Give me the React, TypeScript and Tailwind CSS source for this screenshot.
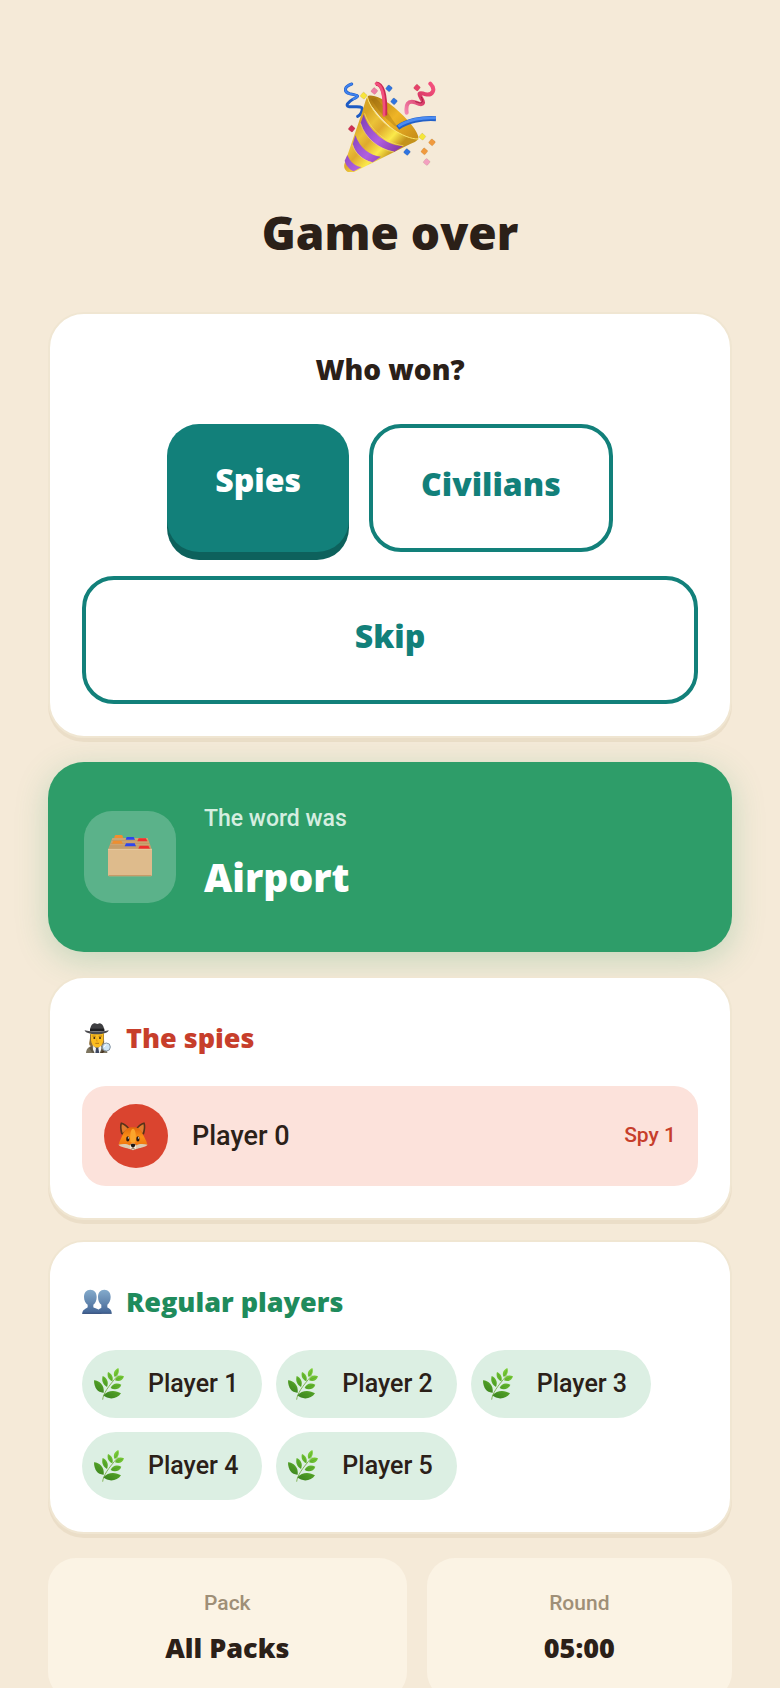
import { useState } from "react";

type Winner = "spies" | "civilians" | "skip";

const regularPlayers = ["Player 1", "Player 2", "Player 3", "Player 4", "Player 5"];

const confetti: [number, number, string][] = [
  [86, 62, "#f7e43c"],
  [118, 48, "#ee7ca4"],
  [162, 40, "#2f74e0"],
  [177, 79, "#2f74e0"],
  [246, 38, "#e6426a"],
  [50, 161, "#cf2f55"],
  [262, 185, "#f5e63a"],
  [291, 202, "#f09a3e"],
  [268, 229, "#f09a3e"],
  [216, 231, "#2f74e0"],
  [275, 261, "#f3a0c0"],
];

function PartyIcon() {
  return (
    <svg className="w-23 h-23" viewBox="27 15 276 276" fill="none" strokeLinecap="round" aria-hidden="true">
      <defs>
        <linearGradient id="cone" x1="60" y1="150" x2="165" y2="245" gradientUnits="userSpaceOnUse">
          <stop offset="0" stopColor="#d8a524" />
          <stop offset="0.25" stopColor="#ebc238" />
          <stop offset="0.45" stopColor="#dfaa2e" />
          <stop offset="0.75" stopColor="#fbea4a" />
          <stop offset="1" stopColor="#c4921c" />
        </linearGradient>
        <linearGradient id="mouth" x1="110" y1="70" x2="240" y2="190" gradientUnits="userSpaceOnUse">
          <stop offset="0" stopColor="#b07c12" />
          <stop offset="0.5" stopColor="#efb526" />
          <stop offset="1" stopColor="#c98f1a" />
        </linearGradient>
        <linearGradient id="stripe" x1="60" y1="140" x2="190" y2="240" gradientUnits="userSpaceOnUse">
          <stop offset="0" stopColor="#7d3fb4" />
          <stop offset="0.55" stopColor="#b060e0" />
          <stop offset="1" stopColor="#8434a0" />
        </linearGradient>
        <linearGradient id="ribbon" x1="210" y1="110" x2="300" y2="30" gradientUnits="userSpaceOnUse">
          <stop offset="0" stopColor="#f489b0" />
          <stop offset="0.5" stopColor="#d93a66" />
          <stop offset="1" stopColor="#f5527f" />
        </linearGradient>
      </defs>
      <path d="M99 63C120 55 165 82 205 122C240 157 257 187 248 193C225 200 175 168 145 135C115 102 92 72 99 63Z" fill="url(#mouth)" />
      <path d="M108 72C125 100 145 125 178 152L190 158C165 125 150 95 122 68Z" fill="#8d610c" opacity="0.3" />
      <path d="M50 27C24 36 28 52 44 56C72 61 74 63 55 72C37 82 31 92 42 95C62 97 80 92 82 101C81 113 75 121 68 124" stroke="#1d5bc4" strokeWidth="9" />
      <path d="M50 27C24 36 28 52 44 56C72 61 74 63 55 72" stroke="#3f82ee" strokeWidth="6" />
      <path d="M97 65C104 100 140 141 172 162C200 180 228 193 250 192C245 199 236 203 224 208L55 292C40 297 24 285 28 268L82 110C88 90 92 72 97 65Z" fill="url(#cone)" />
      <path d="M97 65C104 100 140 141 172 162C200 180 228 193 250 192" stroke="#fbe46a" strokeWidth="3" />
      <path d="M86 118C100 165 150 210 204 214L178 230C130 222 88 188 77 144Z" fill="url(#stripe)" />
      <path d="M61 181C75 220 105 242 138 245L113 262C83 255 60 235 53 208Z" fill="url(#stripe)" />
      <path d="M37 240C46 262 62 275 80 276L56 289C42 282 32 270 29 257Z" fill="url(#stripe)" />
      <path d="M77 146C90 189 130 222 176 231M53 210C60 236 84 256 111 263M89 116C104 162 152 206 204 212" stroke="#f6dc74" strokeWidth="2" />
      <path d="M123 26C146 28 152 70 150 121" stroke="#c92952" strokeWidth="13" strokeLinecap="butt" />
      <path d="M123 26C143 28 149 70 147 121" stroke="#f34f7d" strokeWidth="8" />
      <path d="M286 26C304 44 292 62 272 58C250 50 250 56 259 70C270 87 262 92 243 83C217 74 212 90 215 113" stroke="url(#ribbon)" strokeWidth="12" />
      <path d="M259 66C268 84 260 88 242 80" stroke="#a82048" strokeWidth="3" />
      <path d="M188 158C215 138 260 128 303 131" stroke="#2260c8" strokeWidth="15" strokeLinecap="butt" />
      <path d="M190 154C218 135 262 126 303 129" stroke="#4c8cf2" strokeWidth="8" strokeLinecap="butt" />
      {confetti.map(([x, y, color]) => (
        <rect key={`${x}-${y}`} x={x - 8} y={y - 8} width="16" height="16" rx="3" fill={color} stroke="#6b4a20" strokeOpacity="0.3" strokeWidth="1" transform={`rotate(40 ${x} ${y})`} />
      ))}
    </svg>
  );
}

function CardBoxIcon() {
  return (
    <svg className="w-11 h-11" viewBox="0 7 132 132" aria-hidden="true">
      <path d="M18 18L20 10Q21 7 24 7H40Q43 7 44 10L46 18Z" fill="#f28f2e" />
      <path d="M13 16H119L132 52H0Z" fill="#cda471" />
      <path d="M11 24H121M8 32H125M5 40H127M3 46H129" stroke="#b8915f" strokeWidth="2" />
      <path d="M53 21L56 13H77L81 21Z" fill="#2c46ee" />
      <path d="M88 26L92 17H114L118 26Z" fill="#f02e2e" />
      <path d="M12 33L16 24H40L45 33Z" fill="#ee8f30" />
      <path d="M50 41L54 32H80L84 41Z" fill="#2c46ee" />
      <path d="M91 48L95 39H121L126 48Z" fill="#f02e2e" />
      <path d="M0 50H132V127Q132 131 128 131H4Q0 131 0 127Z" fill="#debb8c" />
      <path d="M0 50H132" stroke="#efd3ad" strokeWidth="2" />
      <path d="M2 129H130" stroke="#c09663" strokeWidth="3" />
    </svg>
  );
}

function SpyIcon() {
  return (
    <svg className="w-[30px] h-[30px]" viewBox="0 0 90 90" aria-hidden="true">
      <path d="M12 91C12 76 22 69 34 68H58C69 70 76 78 76 91Z" fill="#7d7560" />
      <path d="M25 28H66V45C66 62 57 73 46 73C34 73 25 62 25 45Z" fill="#fbbd1f" />
      <path d="M24 34L27 34V52C28 60 32 66 34 70L24 68C18 62 26 52 24 34ZM66 34L64 34V52C63 60 59 66 57 70L64 68C69 62 65 52 66 34Z" fill="#8a6a35" />
      <path d="M34 68L45 78L57 68L61 91H31Z" fill="#f2f4f6" />
      <path d="M42 75H49L52 91H40Z" fill="#3c4660" />
      <path d="M28 68L22 76L32 91H38ZM62 68L68 76L58 91H53Z" fill="#5d5643" />
      <path d="M24 24C25 8 31 1 39 1L46 3L53 1C61 2 66 10 67 24Z" fill="#3f3f42" />
      <path d="M24 17H67V25H24Z" fill="#1f1f22" />
      <path d="M8 22C25 27 66 27 80 22C80 29 65 34 44 34C24 34 8 29 8 22Z" fill="#4b4b4f" />
      <circle cx="37" cy="45" r="3" fill="#3d2712" />
      <circle cx="54" cy="45" r="3" fill="#3d2712" />
      <path d="M31 39L41 40M50 40L60 39M40 61H51" stroke="#8c5312" strokeWidth="2" />
      <path d="M45 46L43 54H48" stroke="#dd8f10" strokeWidth="2" fill="none" />
      <path d="M66 83L58 91" stroke="#4a3524" strokeWidth="5" />
      <circle cx="73" cy="72" r="12" fill="#cfe6f7" stroke="#8494a2" strokeWidth="3" />
      <path d="M67 72Q68 66 73 65" stroke="#fff" strokeWidth="3" fill="none" />
    </svg>
  );
}

function FoxIcon() {
  return (
    <svg className="w-[30px] h-[30px]" viewBox="0 0 92 90" aria-hidden="true">
      <defs>
        <linearGradient id="fox" x1="0" y1="0" x2="0" y2="1">
          <stop offset="0" stopColor="#e0660c" />
          <stop offset="0.45" stopColor="#fb9016" />
          <stop offset="1" stopColor="#ea6a0c" />
        </linearGradient>
      </defs>
      <path d="M10 40C5 24 5 10 9 3C18 4 28 12 35 21L20 42ZM80 40C85 24 85 10 81 3C72 4 62 12 56 21L70 42Z" fill="#57321a" />
      <path d="M14 36C11 24 10 15 12 9C18 11 25 17 30 23ZM76 36C79 24 80 15 78 9C72 11 65 17 60 23Z" fill="#e07c30" />
      <path d="M46 18C60 17 72 25 76 40C81 50 86 58 90 70L46 84L2 70C6 58 11 50 15 40C19 25 32 17 46 18Z" fill="url(#fox)" />
      <path d="M1 72C12 69 27 68 36 74C39 66 53 66 56 74C65 68 80 69 91 72C83 80 64 82 56 85L46 89L36 85C28 82 9 80 1 72Z" fill="#dccbb2" />
      <path d="M38 62C36 40 39 24 46 23C53 24 56 40 54 62C52 68 40 68 38 62Z" fill="#fba52c" />
      <path d="M36 74C39 70 53 70 56 74L54 84L46 87L38 84Z" fill="#f7ead6" />
      <ellipse cx="30" cy="54" rx="5" ry="8" fill="#2b1a10" />
      <ellipse cx="61" cy="54" rx="5" ry="8" fill="#2b1a10" />
      <circle cx="32" cy="51" r="2" fill="#fff" />
      <circle cx="63" cy="51" r="2" fill="#fff" />
      <path d="M38 71Q46 67 54 71Q52 79 46 80Q40 79 38 71Z" fill="#1c1512" />
      <path d="M46 79V83M40 85Q46 82 52 85" stroke="#6b4a35" strokeWidth="2" fill="none" />
    </svg>
  );
}

function PeopleIcon() {
  return (
    <svg className="w-[30px] h-[30px]" viewBox="0 0 90 90" aria-hidden="true">
      <defs>
        <linearGradient id="people" x1="0" y1="8" x2="0" y2="82" gradientUnits="userSpaceOnUse">
          <stop offset="0" stopColor="#84abcc" />
          <stop offset="0.5" stopColor="#6488b0" />
          <stop offset="1" stopColor="#3f6192" />
        </linearGradient>
      </defs>
      <path d="M67 8C79 8 86 17 86 30C86 41 81 49 76 53V61C79 65 89 65 89 79H46C46 68 53 65 58 62V53C52 49 48 41 48 30C48 17 55 8 67 8Z" fill="url(#people)" />
      <path d="M25 8C37 8 44 17 44 30C44 41 40 49 34 53V61C38 65 55 65 59 80H1C1 67 13 66 17 61V53C11 49 6 41 6 30C6 17 13 8 25 8Z" fill="url(#people)" />
      <path d="M1 79H89" stroke="#35507c" strokeWidth="3" />
    </svg>
  );
}

function LeafIcon() {
  return (
    <svg className="w-[30px] h-8" viewBox="0 0 90 96" aria-hidden="true">
      <defs>
        <linearGradient id="leaf" x1="80" y1="0" x2="25" y2="96" gradientUnits="userSpaceOnUse">
          <stop offset="0" stopColor="#83d53a" />
          <stop offset="0.5" stopColor="#5cae2a" />
          <stop offset="1" stopColor="#34791c" />
        </linearGradient>
      </defs>
      <path d="M26 95C28 76 42 56 72 22" stroke="#86b45a" strokeWidth="3" fill="none" />
      <g fill="url(#leaf)">
        <path d="M0 37C16 37 32 52 29 74C12 75 0 60 0 37Z" />
        <path d="M28 82C42 65 66 66 81 76C70 94 42 96 28 82Z" />
        <path d="M26 24C39 30 45 42 39 57C27 50 22 38 26 24Z" />
        <path d="M42 12C54 18 59 28 55 40C44 35 38 25 42 12Z" />
        <path d="M73 0C77 11 73 22 62 27C56 17 61 5 73 0Z" />
        <path d="M63 37C67 23 78 20 90 25C87 37 75 43 63 37Z" />
        <path d="M50 60C55 46 69 43 82 50C78 63 62 68 50 60Z" />
      </g>
      <path d="M5 42C15 51 23 61 27 72M32 82C48 79 62 77 77 77M29 30L38 53M45 18L54 37M72 5L64 24M67 35L86 27M54 58L78 51" stroke="#3d8a20" strokeWidth="1.5" fill="none" opacity="0.6" />
    </svg>
  );
}

export default function App() {
  const [winner, setWinner] = useState<Winner>("spies");

  const card = "rounded-[36px] border-2 border-[#f0e6d2] bg-white p-8 shadow-[0_4px_0_#ebdec8]";
  const display = "font-['Open_Sans','Noto_Sans',sans-serif] font-extrabold";
  const filled = "bg-[#12807a] text-white pt-8 pb-12 px-12 shadow-[0_8px_0_#0d615c]";
  const outlined = "border-4 border-[#12807a] text-[#12807a] pt-8 pb-10 px-12";

  const winnerClass = (value: Winner) =>
    `rounded-[32px] text-[32px] leading-[48px] ${display} ${winner === value ? filled : outlined}`;

  return (
    <main className="h-screen overflow-y-auto [scrollbar-width:none] bg-[#f5ead8] px-12 pb-12 text-[#2b2018] font-medium font-['Roboto','Liberation_Sans',sans-serif]">
      {/* Header */}
      <header className="flex flex-col items-center pt-20 pb-[52px]">
        <PartyIcon />
        <h1 className={`mt-8 text-[46px] leading-[56px] ${display}`}>Game over</h1>
      </header>

      {/* Winner picker */}
      <section className={card}>
        <h2 className={`mb-8 text-center text-[28px] leading-[46px] ${display}`}>Who won?</h2>
        <div className="flex flex-wrap justify-center gap-x-5 gap-y-6">
          <button className={winnerClass("spies")} onClick={() => setWinner("spies")}>Spies</button>
          <button className={winnerClass("civilians")} onClick={() => setWinner("civilians")}>Civilians</button>
          <button className={`w-full ${winnerClass("skip")}`} onClick={() => setWinner("skip")}>Skip</button>
        </div>
      </section>

      {/* Secret word */}
      <section className="mt-6 flex items-center gap-7 rounded-[36px] bg-[#2e9d69] px-9 py-[37px] text-white shadow-[0_8px_32px_rgba(46,157,105,0.25)]">
        <div className="flex h-23 w-23 shrink-0 items-center justify-center rounded-[28px] bg-white/22">
          <CardBoxIcon />
        </div>
        <div>
          <p className="text-[23px] leading-10 text-[#d5eee0]">The word was</p>
          <p className={`text-[39px] leading-[76px] ${display}`}>Airport</p>
        </div>
      </section>

      {/* Spies */}
      <section className={`mt-6 ${card}`}>
        <h2 className={`mb-5 flex items-center gap-3.5 text-[27px] leading-[56px] text-[#c73e2b] ${display}`}>
          <SpyIcon /> The spies
        </h2>
        <div className="flex items-center gap-6 rounded-3xl bg-[#fce2db] px-[22px] py-[18px]">
          <div className="flex h-16 w-16 items-center justify-center rounded-full bg-[#da442f] pr-1.5">
            <FoxIcon />
          </div>
          <span className="flex-1 text-[27px] leading-9">Player 0</span>
          <span className="text-[21px] text-[#c73e2b]">Spy 1</span>
        </div>
      </section>

      {/* Regular players */}
      <section className={`mt-5 ${card}`}>
        <h2 className={`mb-5 flex items-center gap-3.5 text-[27px] leading-[56px] text-[#1f8b5c] ${display}`}>
          <PeopleIcon /> Regular players
        </h2>
        <ul className="flex flex-wrap gap-3.5">
          {regularPlayers.map((name) => (
            <li key={name} className="flex items-center gap-6 rounded-[34px] bg-[#dcefe3] py-4 pl-3 pr-6">
              <LeafIcon />
              <span className="text-[25px] leading-9">{name}</span>
            </li>
          ))}
        </ul>
      </section>

      {/* Pack and round */}
      <footer className="mt-6 flex gap-5 text-center">
        <div className="flex-auto rounded-[28px] bg-[#fbf3e4] px-6 pt-7 pb-6">
          <p className="text-[21px] leading-[34px] text-[#9f8f77]">Pack</p>
          <p className={`text-[27px] leading-[56px] ${display}`}>All Packs</p>
        </div>
        <div className="flex-auto rounded-[28px] bg-[#fbf3e4] px-6 pt-7 pb-6">
          <p className="text-[21px] leading-[34px] text-[#9f8f77]">Round</p>
          <p className={`text-[27px] leading-[56px] ${display}`}>05:00</p>
        </div>
      </footer>
    </main>
  );
}
